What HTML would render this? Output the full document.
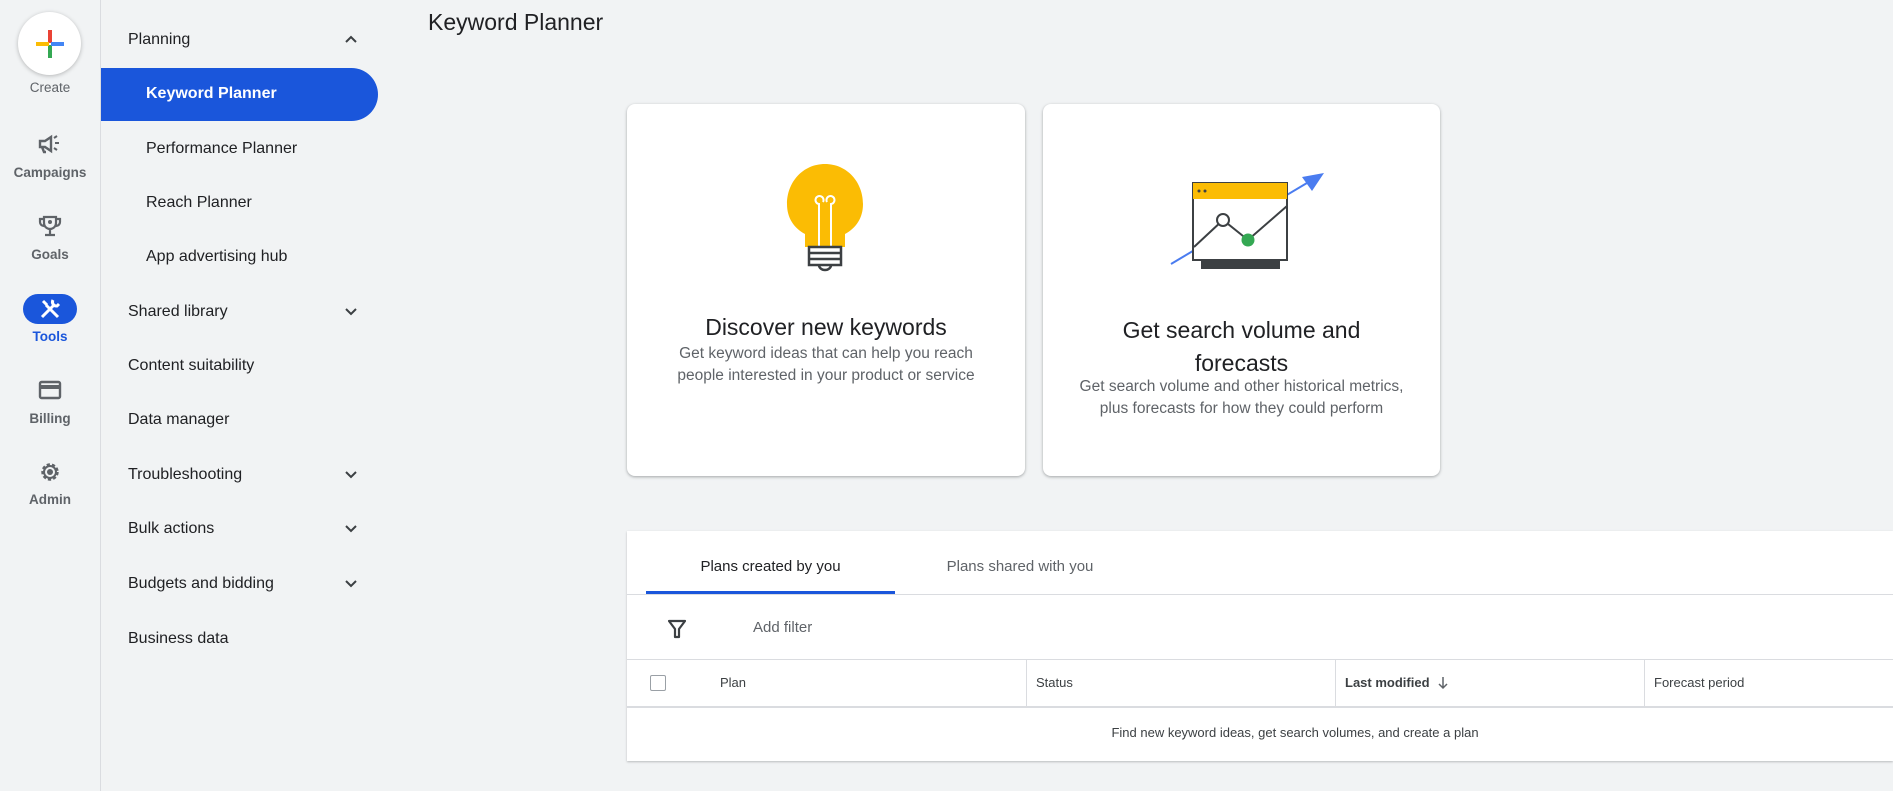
<!DOCTYPE html>
<html><head><meta charset="utf-8"><style>
*{box-sizing:border-box;margin:0;padding:0}
body{width:1893px;height:791px;background:#f1f3f4;font-family:"Liberation Sans",Arial,sans-serif;color:#3c4043;position:relative;overflow:hidden}
.abs{position:absolute}
.rail{left:0;top:0;width:101px;height:791px;border-right:1px solid #dadce0}
.rl{position:absolute;width:100px;text-align:center;font-size:13.5px;color:#5f6368;font-weight:bold}
.ri{position:absolute;left:38px}
.nav{position:absolute;font-size:16px;color:#202124;transform:translateY(-50%)}
.sub{left:146px}
.chev{position:absolute;left:343px}
.card{background:#fff;border-radius:8px;box-shadow:0 1px 3px rgba(60,64,67,.3),0 1px 2px rgba(60,64,67,.15);}
.ct{position:absolute;width:100%;text-align:center;font-size:23px;color:#202124}
.cd{position:absolute;width:100%;text-align:center;font-size:15.5px;color:#5f6368;line-height:22px}
.th{position:absolute;top:675px;font-size:13px;color:#3c4043}
</style></head><body>
<div class="abs rail"></div>
<div class="abs" style="left:18px;top:12px;width:63px;height:63px;border-radius:50%;background:#fff;box-shadow:0 1px 4px rgba(0,0,0,.25)"></div>
<div class="abs" style="left:48px;top:30px;width:4px;height:13px;background:#ea4335"></div>
<div class="abs" style="left:48px;top:45px;width:4px;height:13px;background:#34a853"></div>
<div class="abs" style="left:36px;top:42px;width:13px;height:4px;background:#fbbc04"></div>
<div class="abs" style="left:51px;top:42px;width:13px;height:4px;background:#4285f4"></div>
<div class="rl" style="top:80px;font-weight:normal">Create</div>
<svg class="ri" style="top:134px" width="24" height="22" viewBox="0 0 24 22"><path d="M2 7h5l6-4v14l-6-4H2z M4 13l2 5h2" fill="none" stroke="#5f6368" stroke-width="2.4"/><path d="M17 9h4M16 4l3-2M16 14l3 2" stroke="#5f6368" stroke-width="2"/></svg>
<div class="rl" style="top:165px">Campaigns</div>
<svg class="ri" style="top:214px" width="24" height="24" viewBox="0 0 24 24"><path d="M6 3h12v6a6 6 0 0 1-12 0z M6 5H2v3a4 4 0 0 0 4 4 M18 5h4v3a4 4 0 0 1-4 4 M12 15v5 M7 21h10" fill="none" stroke="#5f6368" stroke-width="2.2"/><circle cx="12" cy="8" r="2" fill="#5f6368"/></svg>
<div class="rl" style="top:247px">Goals</div>
<div class="abs" style="left:23px;top:294px;width:54px;height:30px;border-radius:15px;background:#1a56db"></div>
<svg class="abs" style="left:38px;top:297px" width="24" height="24" viewBox="0 0 24 24"><path d="M4 20L16 8M20 20L8 8M5 4l4 4M15 3a4 4 0 0 0 4 6l2-2" fill="none" stroke="#fff" stroke-width="3"/></svg>
<div class="rl" style="top:329px;color:#1a56db">Tools</div>
<svg class="ri" style="top:380px" width="24" height="20" viewBox="0 0 24 20"><rect x="2" y="2" width="20" height="16" rx="1.5" fill="none" stroke="#5f6368" stroke-width="2.4"/><rect x="2" y="5" width="20" height="4" fill="#5f6368"/></svg>
<div class="rl" style="top:411px">Billing</div>
<svg class="ri" style="top:460px" width="24" height="24" viewBox="0 0 24 24"><circle cx="12" cy="12" r="7.5" fill="none" stroke="#5f6368" stroke-width="2.4" stroke-dasharray="3.2 2.1"/><circle cx="12" cy="12" r="6" fill="none" stroke="#5f6368" stroke-width="2"/><circle cx="12" cy="12" r="3" fill="#5f6368"/></svg>
<div class="rl" style="top:492px">Admin</div>

<div class="abs" style="left:101px;top:68px;width:277px;height:53px;background:#1a56db;border-radius:0 27px 27px 0"></div>
<div class="nav" style="left:128px;top:40px">Planning</div>
<svg class="chev" style="top:33px" width="16" height="12" viewBox="0 0 16 12"><path d="M3 9l5-5 5 5" fill="none" stroke="#3c4043" stroke-width="2"/></svg>
<div class="nav sub" style="top:94px;color:#fff;font-weight:bold">Keyword Planner</div>
<div class="nav sub" style="top:149px">Performance Planner</div>
<div class="nav sub" style="top:203px">Reach Planner</div>
<div class="nav sub" style="top:257px">App advertising hub</div>
<div class="nav" style="left:128px;top:312px">Shared library</div>
<div class="nav" style="left:128px;top:366px">Content suitability</div>
<div class="nav" style="left:128px;top:420px">Data manager</div>
<div class="nav" style="left:128px;top:475px">Troubleshooting</div>
<div class="nav" style="left:128px;top:529px">Bulk actions</div>
<div class="nav" style="left:128px;top:584px">Budgets and bidding</div>
<div class="nav" style="left:128px;top:639px">Business data</div>
<svg class="chev" style="top:306px" width="16" height="12" viewBox="0 0 16 12"><path d="M3 3l5 5 5-5" fill="none" stroke="#3c4043" stroke-width="2"/></svg>
<svg class="chev" style="top:469px" width="16" height="12" viewBox="0 0 16 12"><path d="M3 3l5 5 5-5" fill="none" stroke="#3c4043" stroke-width="2"/></svg>
<svg class="chev" style="top:523px" width="16" height="12" viewBox="0 0 16 12"><path d="M3 3l5 5 5-5" fill="none" stroke="#3c4043" stroke-width="2"/></svg>
<svg class="chev" style="top:578px" width="16" height="12" viewBox="0 0 16 12"><path d="M3 3l5 5 5-5" fill="none" stroke="#3c4043" stroke-width="2"/></svg>

<div class="abs" style="left:428px;top:9px;font-size:23px;color:#202124">Keyword Planner</div>

<div class="abs card" style="left:627px;top:104px;width:398px;height:372px">
<svg class="abs" style="left:158px;top:58px" width="80" height="110" viewBox="0 0 80 110"><path d="M40 2C18 2 2 20 2 42c0 14 7 24 18 30v13h40V72c11-6 18-16 18-30C78 20 62 2 40 2z" fill="#fbbc04"/><path d="M34 85V42a4 4 0 1 1 4-2M46 85V42a4 4 0 1 0-4-2" fill="none" stroke="#fff" stroke-width="2"/><rect x="24" y="85" width="32" height="18" fill="#fff" stroke="#3c4043" stroke-width="2.5"/><path d="M24 91h32M24 97h32" stroke="#3c4043" stroke-width="2.5"/><path d="M34 103a6 5 0 0 0 12 0" fill="none" stroke="#3c4043" stroke-width="2.5"/></svg>
<div class="ct" style="top:210px">Discover new keywords</div>
<div class="cd" style="top:239px">Get keyword ideas that can help you reach<br>people interested in your product or service</div>
</div>
<div class="abs card" style="left:1043px;top:104px;width:397px;height:372px">
<svg class="abs" style="left:125px;top:66px" width="160" height="104" viewBox="1168 170 160 104"><path d="M1171 264L1312 180" stroke="#4a7cf0" stroke-width="2"/><path d="M1324 173l-22 4 10 14z" fill="#4a7cf0"/><rect x="1201" y="260" width="79" height="9" fill="#3c4043"/><rect x="1193" y="183" width="94" height="77" fill="#fff" stroke="#3c4043" stroke-width="2"/><rect x="1193" y="183" width="94" height="16" fill="#fbbc04"/><circle cx="1199" cy="191" r="1.5" fill="#3c4043"/><circle cx="1205" cy="191" r="1.5" fill="#3c4043"/><path d="M1194 247L1223 220L1248 240L1287 206" fill="none" stroke="#3c4043" stroke-width="2"/><circle cx="1223" cy="220" r="6" fill="#fff" stroke="#3c4043" stroke-width="2"/><circle cx="1248" cy="240" r="6.5" fill="#34a853"/></svg>
<div class="ct" style="top:210px;line-height:33px">Get search volume and<br>forecasts</div>
<div class="cd" style="top:272px">Get search volume and other historical metrics,<br>plus forecasts for how they could perform</div>
</div>

<div class="abs" style="left:627px;top:531px;width:1266px;height:230px;background:#fff;box-shadow:0 1px 2px rgba(60,64,67,.3)"></div>
<div class="abs" style="left:646px;top:558px;width:249px;text-align:center;font-size:15px;color:#202124">Plans created by you</div>
<div class="abs" style="left:900px;top:558px;width:240px;text-align:center;font-size:15px;color:#5f6368">Plans shared with you</div>
<div class="abs" style="left:646px;top:591px;width:249px;height:3px;background:#1a56db"></div>
<div class="abs" style="left:627px;top:594px;width:1266px;height:1px;background:#dadce0"></div>
<svg class="abs" style="left:668px;top:619px" width="18" height="20" viewBox="0 0 18 20"><path d="M1 2h16l-6 8v8h-4v-8z" fill="none" stroke="#3c4043" stroke-width="2.2" stroke-linejoin="round"/></svg>
<div class="abs" style="left:753px;top:619px;font-size:15px;color:#5f6368">Add filter</div>
<div class="abs" style="left:627px;top:659px;width:1266px;height:1px;background:#dadce0"></div>
<div class="abs" style="left:650px;top:675px;width:16px;height:16px;border:1.5px solid #9aa0a6;border-radius:2px"></div>
<div class="th" style="left:720px">Plan</div>
<div class="abs" style="left:1026px;top:660px;width:1px;height:47px;background:#dadce0"></div>
<div class="th" style="left:1036px">Status</div>
<div class="abs" style="left:1335px;top:660px;width:1px;height:47px;background:#dadce0"></div>
<div class="th" style="left:1345px;font-weight:bold">Last modified</div>
<svg class="abs" style="left:1437px;top:676px" width="12" height="14" viewBox="0 0 12 14"><path d="M6 1v11M2 8l4 4 4-4" fill="none" stroke="#5f6368" stroke-width="1.5"/></svg>
<div class="abs" style="left:1644px;top:660px;width:1px;height:47px;background:#dadce0"></div>
<div class="th" style="left:1654px">Forecast period</div>
<div class="abs" style="left:627px;top:706px;width:1266px;height:2px;background:#dadce0"></div>
<div class="abs" style="left:627px;top:725px;width:1336px;text-align:center;font-size:13px;color:#3c4043">Find new keyword ideas, get search volumes, and create a plan</div>
</body></html>
